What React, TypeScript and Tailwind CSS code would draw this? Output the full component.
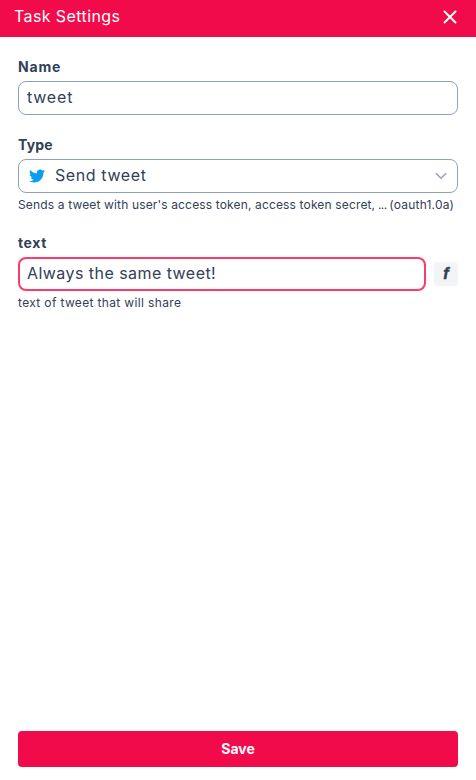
import React from "react";
import { FaTwitter } from "react-icons/fa";

function CloseIcon() {
  return (
    <svg width="14" height="14" viewBox="0 0 14 14" fill="none" stroke="white" strokeWidth="2" strokeLinecap="round">
      <path d="M1.5 1.5 12.5 12.5M12.5 1.5 1.5 12.5" />
    </svg>
  );
}

function Chevron() {
  return (
    <svg width="12" height="8" viewBox="0 0 12 8" fill="none" stroke="#94a3b8" strokeWidth="1.5" strokeLinecap="round" strokeLinejoin="round">
      <path d="M1.2 1.5 6 6.3 10.8 1.5" />
    </svg>
  );
}

export default function App() {
  return (
    <div className="flex h-[780px] w-[476px] flex-col bg-white font-['Inter',sans-serif] text-slate-700">
      <header className="flex h-[37px] shrink-0 items-center justify-between bg-[#f10b4a] pr-[19px] pb-1 pl-[14px] text-white">
        <h1 className="pb-px text-base leading-6 whitespace-nowrap">
          <span className="tracking-[0.4px]">Task Settings</span>
        </h1>
        <button type="button" aria-label="Close">
          <CloseIcon />
        </button>
      </header>
      <main className="flex grow flex-col px-[18px] pt-5">
        <label className="h-5 text-sm leading-5 font-bold">
          <span className="tracking-[0.8px]">Name</span>
        </label>
        <div className="mt-1 flex h-[34px] items-center rounded-lg border border-slate-400 px-2 pb-0.5 text-base whitespace-nowrap">
          <span className="tracking-[0.8px]">tweet</span>
        </div>
        <label className="mt-5 h-5 text-sm leading-5 font-bold">
          <span className="tracking-[0.2px]">Type</span>
        </label>
        <div className="mt-1 flex h-[34px] items-center rounded-lg border border-slate-400 pr-[10px] pl-[10px] text-base whitespace-nowrap">
          <FaTwitter size={16} color="#0b9cf0" />
          <span className="ml-[10px] pb-0.5 tracking-[0.6px]">Send tweet</span>
          <span className="ml-auto">
            <Chevron />
          </span>
        </div>
        <p className="mt-1 h-4 text-xs leading-4 whitespace-nowrap">
          <span className="tracking-[0.15px]">Sends a tweet with user's access token, access token secret,</span>
          <span className="tracking-[-0.6px]"> ... </span>
          <span className="tracking-[0.2px]">(oauth1.0a)</span>
        </p>
        <label className="mt-5 h-5 text-sm leading-5 font-bold">
          <span className="tracking-[0.6px]">text</span>
        </label>
        <div className="mt-1 flex items-center gap-2">
          <div className="flex h-[34px] w-[408px] items-center rounded-lg border-2 border-[#fb3b69] px-[7px] pb-0.5 text-base whitespace-nowrap">
            <span className="tracking-[0.45px]">Always the same tweet!</span>
          </div>
          <button type="button" className="flex size-6 items-center justify-center rounded bg-[#f3f4f6] font-['Liberation_Sans',sans-serif] text-base leading-6 font-bold italic [-webkit-text-stroke:0.5px_currentColor]">
            f
          </button>
        </div>
        <p className="mt-1 h-4 text-xs leading-4 whitespace-nowrap">
          <span className="tracking-[0.35px]">text of tweet that will share</span>
        </p>
        <button type="button" className="mt-auto mb-[13px] h-9 rounded bg-[#f10b4a] text-sm font-bold text-white">
          Save
        </button>
      </main>
    </div>
  );
}
